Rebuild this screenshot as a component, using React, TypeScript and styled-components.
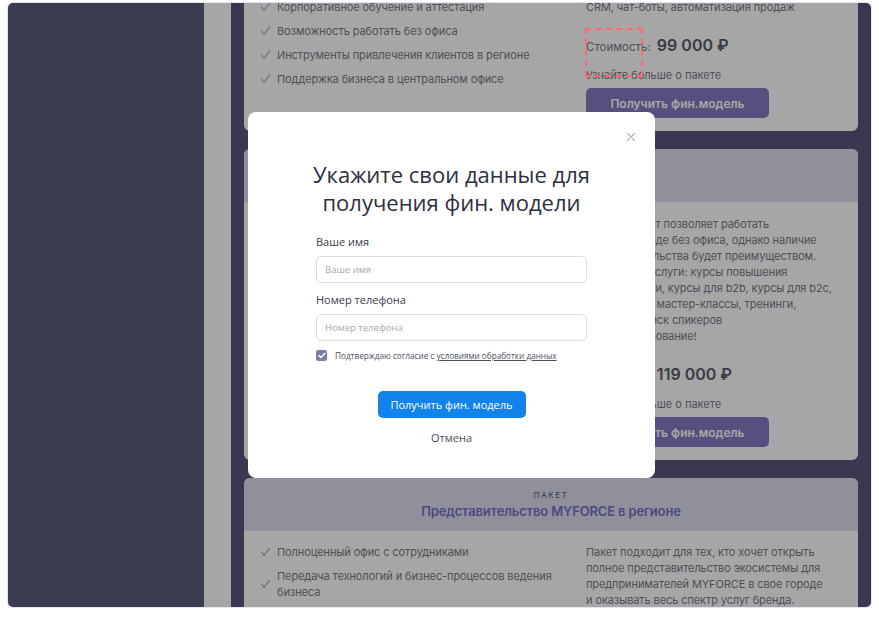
import React from 'react';
import styled, { createGlobalStyle } from 'styled-components';

const Global = createGlobalStyle`
  html, body { margin: 0; padding: 0; background: #ffffff; }
  body { width: 879px; height: 619px; overflow: hidden; font-family: Inter, "Noto Sans", sans-serif; }
  * { box-sizing: border-box; }
`;

const Frame = styled.div`
  position: relative;
  margin: 3px 8px 0;
  width: 863px;
  height: 604px;
  border-radius: 5px;
  overflow: hidden;
  display: flex;
  box-shadow: 0 0 0 1px #e4e5f1;
`;

const Sidebar = styled.aside`
  width: 196px;
  flex: none;
  background: #595e7e;
`;

const Gutter = styled.div`
  width: 27px;
  flex: none;
  background: #ffffff;
`;

const Main = styled.main`
  flex: 1;
  background: #5e537b;
  padding: 0 13px;
`;

const CardList = styled.div`
  margin-top: -118px;
  display: flex;
  flex-direction: column;
  gap: 18px;
`;

const Card = styled.section`
  background: #ffffff;
  border-radius: 6px;
  overflow: hidden;
`;

const CardHeader = styled.header`
  height: 53px;
  padding-top: 11px;
  background: #dcdef0;
  text-align: center;
`;

const Kicker = styled.div`
  font-size: 8px;
  line-height: 12px;
  letter-spacing: 1.6px;
  color: #54546a;
`;

const CardTitle = styled.h3`
  margin: 2px 0 0;
  font-size: 13px;
  line-height: 16px;
  font-weight: 600;
  letter-spacing: -0.15px;
  color: #776fc5;
`;

const CardBody = styled.div<{ $top: number }>`
  display: grid;
  grid-template-columns: 310px 256px;
  column-gap: 16px;
  padding: ${(p) => p.$top}px 16px 13px;
`;

const Features = styled.ul`
  margin: 0;
  padding: 0;
  list-style: none;
  display: flex;
  flex-direction: column;
  gap: 8px;
`;

const Feature = styled.li`
  display: flex;
  align-items: center;
  font-size: 11px;
  line-height: 16px;
  letter-spacing: -0.1px;
  color: #7a7a8c;
`;

const Check = styled.svg`
  width: 17px;
  flex: none;
`;

const Side = styled.div`
  display: flex;
  flex-direction: column;
  align-items: flex-start;
`;

const Desc = styled.p`
  margin: 0;
  font-size: 11px;
  line-height: 16px;
  letter-spacing: -0.1px;
  color: #7a7a8c;
  white-space: nowrap;
`;

const PriceRow = styled.div`
  margin-top: 18px;
  display: flex;
  align-items: baseline;
  gap: 6px;
  line-height: 24px;
`;

const PriceLabel = styled.span`
  font-size: 11.5px;
  color: #7a7a8c;
`;

const PriceValue = styled.span`
  font-size: 16px;
  font-weight: 600;
  color: #5a5a6b;
`;

const More = styled.span`
  margin-top: 8px;
  font-size: 11px;
  line-height: 16px;
  color: #7a7a8c;
`;

const BuyButton = styled.button`
  margin-top: 5px;
  width: 183px;
  height: 30px;
  border: 0;
  border-radius: 5px;
  background: #837bc2;
  color: #ffffff;
  font-family: Inter, "Noto Sans", sans-serif;
  font-size: 12px;
  font-weight: 600;
`;

const Overlay = styled.div`
  position: absolute;
  inset: 0;
  background: rgba(0, 0, 0, 0.35);
`;

const Annotation = styled.div`
  position: absolute;
  left: 577px;
  top: 25px;
  width: 58px;
  height: 49px;
  border: 2px dashed #ff6868;
`;

const Modal = styled.div`
  position: absolute;
  left: 240px;
  top: 109px;
  width: 407px;
  height: 366px;
  background: #ffffff;
  border-radius: 8px;
  padding: 50px 68px 0;
  font-family: "Open Sans", "Noto Sans", sans-serif;
  display: flex;
  flex-direction: column;
`;

const Close = styled.button`
  position: absolute;
  top: 20px;
  right: 19px;
  width: 10px;
  height: 10px;
  padding: 0;
  border: 0;
  background: none;
  display: flex;
`;

const ModalTitle = styled.h2`
  margin: -2px -30px 0;
  font-size: 22px;
  line-height: 28px;
  font-weight: 400;
  text-align: center;
  color: #2d2f3e;
`;

const Label = styled.label<{ $mt: number }>`
  margin-top: ${(p) => p.$mt}px;
  font-size: 11px;
  line-height: 16px;
  color: #3a3c4c;
`;

const Input = styled.input`
  margin-top: 6px;
  height: 27px;
  width: 100%;
  border: 1px solid #dadbe6;
  border-radius: 5px;
  padding: 0 8px;
  font-family: "Open Sans", "Noto Sans", sans-serif;
  font-size: 9.5px;
  color: #333;
  &::placeholder { color: #a4a6b4; }
`;

const Consent = styled.div`
  margin-top: 9px;
  display: flex;
  align-items: center;
  gap: 8px;
  font-size: 8.2px;
  line-height: 11px;
  color: #4c4e5e;
`;

const Box = styled.span`
  width: 11px;
  height: 11px;
  border-radius: 2px;
  background: #7e7da2;
  display: flex;
  align-items: center;
  justify-content: center;
`;

const Link = styled.a`
  color: #4c4e5e;
  text-decoration: underline;
`;

const Submit = styled.button`
  margin: 30px auto 0;
  width: 148px;
  height: 27px;
  border: 0;
  border-radius: 5px;
  background: #1283ea;
  color: #ffffff;
  font-family: "Open Sans", "Noto Sans", sans-serif;
  font-size: 11px;
`;

const Cancel = styled.button`
  margin: 12px auto 0;
  padding: 0;
  border: 0;
  background: none;
  font-family: "Open Sans", "Noto Sans", sans-serif;
  font-size: 11px;
  line-height: 16px;
  color: #4a4e5e;
`;

const CheckIcon = () => (
  <Check viewBox="0 0 17 10" height="10">
    <polyline points="1.5,5 4,8.5 9.5,1.2" fill="none" stroke="#a3a3cc" strokeWidth="1.1" strokeLinecap="round" strokeLinejoin="round" />
  </Check>
);

type Pkg = {
  title: string;
  features: string[];
  desc: string[];
  price?: string;
  top: number;
};

const packages: Pkg[] = [
  {
    title: 'Франшиза MYFORCE',
    top: 13,
    features: [
      'Право работы под брендом MYFORCE',
      'Доступ к базе знаний и шаблонам',
      'Корпоративное обучение и аттестация',
      'Возможность работать без офиса',
      'Инструменты привлечения клиентов в регионе',
      'Поддержка бизнеса в центральном офисе',
    ],
    desc: [
      'Пакет для тех, кто хочет развивать',
      'бизнес под брендом MYFORCE.',
      'Включает инструменты продаж:',
      'CRM, чат-боты, автоматизация продаж',
    ],
    price: '99 000 ₽',
  },
  {
    title: 'Партнёр MYFORCE',
    top: 14,
    features: [
      'Все возможности пакета «Франшиза»',
      'Проведение мероприятий в регионе',
      'Корпоративное обучение и аттестация',
      'Возможность работать без офиса',
      'Инструменты привлечения клиентов в регионе',
    ],
    desc: [
      'Данный пакет позволяет работать',
      'в своём городе без офиса, однако наличие',
      'представительства будет преимуществом.',
      'Доступные услуги: курсы повышения',
      'квалификации, курсы для b2b, курсы для b2c,',
      'конференци, мастер-классы, тренинги,',
      'подбор и поиск спикеров',
      'и консультирование!',
    ],
    price: '119 000 ₽',
  },
  {
    title: 'Представительство MYFORCE в регионе',
    top: 13,
    features: [
      'Полноценный офис с сотрудниками',
      'Передача технологий и бизнес-процессов ведения бизнеса',
      'Эксклюзивное право на регион',
      'Полный спектр услуг бренда',
    ],
    desc: [
      'Пакет подходит для тех, кто хочет открыть',
      'полное представительство экосистемы для',
      'предпринимателей MYFORCE в свое городе',
      'и оказывать весь спектр услуг бренда.',
    ],
    price: '249 000 ₽',
  },
];

export default function App() {
  return (
    <>
      <Global />
      <Frame>
        <Sidebar />
        <Gutter />
        <Main>
          <CardList>
            {packages.map((p) => (
              <Card key={p.title}>
                <CardHeader>
                  <Kicker>ПАКЕТ</Kicker>
                  <CardTitle>{p.title}</CardTitle>
                </CardHeader>
                <CardBody $top={p.top}>
                  <Features>
                    {p.features.map((f) => (
                      <Feature key={f}>
                        <CheckIcon />
                        <span>{f}</span>
                      </Feature>
                    ))}
                  </Features>
                  <Side>
                    <Desc>
                      {p.desc.map((l, i) => (
                        <React.Fragment key={i}>
                          {i > 0 && <br />}
                          {l}
                        </React.Fragment>
                      ))}
                    </Desc>
                    <PriceRow>
                      <PriceLabel>Стоимость:</PriceLabel>
                      <PriceValue>{p.price}</PriceValue>
                    </PriceRow>
                    <More>Узнайте больше о пакете</More>
                    <BuyButton>Получить фин.модель</BuyButton>
                  </Side>
                </CardBody>
              </Card>
            ))}
          </CardList>
        </Main>
        <Overlay />
        <Annotation />
        <Modal>
          <Close aria-label="Закрыть">
            <svg width="10" height="10" viewBox="0 0 10 10">
              <path d="M1.5 1.5 L8.5 8.5 M8.5 1.5 L1.5 8.5" stroke="#a9adc0" strokeWidth="1.1" strokeLinecap="round" />
            </svg>
          </Close>
          <ModalTitle>
            Укажите свои данные для
            <br />
            получения фин. модели
          </ModalTitle>
          <Label $mt={18}>Ваше имя</Label>
          <Input placeholder="Ваше имя" />
          <Label $mt={9}>Номер телефона</Label>
          <Input placeholder="Номер телефона" />
          <Consent>
            <Box>
              <svg width="8" height="7" viewBox="0 0 8 7">
                <polyline points="1,3.6 3,5.5 7,1.3" fill="none" stroke="#ffffff" strokeWidth="1.4" strokeLinecap="round" strokeLinejoin="round" />
              </svg>
            </Box>
            <span>
              Подтверждаю согласие с <Link>условиями обработки данных</Link>
            </span>
          </Consent>
          <Submit>Получить фин. модель</Submit>
          <Cancel>Отмена</Cancel>
        </Modal>
      </Frame>
    </>
  );
}
